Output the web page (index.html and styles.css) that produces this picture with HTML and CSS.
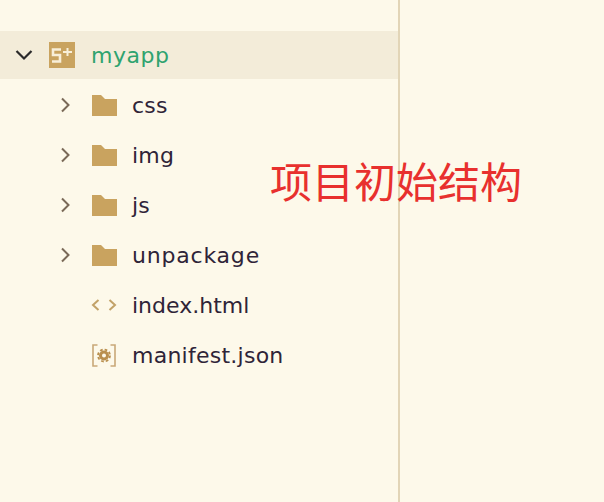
FILE: index.html
```html
<!DOCTYPE html>
<html lang="en">
<head>
    <meta charset="UTF-8">
    <meta name="viewport" content="width=device-width, initial-scale=1.0">
    <title>myapp</title>
    <link rel="stylesheet" href="styles.css">
</head>
<body>

    <!-- Project tree -->
    <div class="sidebar">
        <div class="row root">
            <svg class="arrow" viewBox="0 0 18 12" width="18" height="12"><path d="M1.5 2 L9 9.5 L16.5 2" fill="none" stroke="#2a2a2a" stroke-width="2.2"/></svg>
            <svg class="project-icon" viewBox="0 0 26 26" width="26" height="26">
                <rect width="26" height="26" fill="#c9a35f"/>
                <path d="M12 7.5 H4 V13 H11 V19.5 H3" fill="none" stroke="#f8efd9" stroke-width="2.6"/>
                <path d="M14 10 H23 M18.5 6 V14" fill="none" stroke="#f8efd9" stroke-width="2"/>
            </svg>
            <span class="name project-name">myapp</span>
        </div>

        <div class="row">
            <svg class="caret" viewBox="0 0 10 16" width="10" height="16"><path d="M2 1.5 L8.5 8 L2 14.5" fill="none" stroke="#7a6a58" stroke-width="2"/></svg>
            <svg class="folder" viewBox="0 0 26 21" width="26" height="21"><path d="M1 0 H10 L14 4 H26 V21 H1 Z" fill="#c9a35f"/></svg>
            <span class="name">css</span>
        </div>
        <div class="row">
            <svg class="caret" viewBox="0 0 10 16" width="10" height="16"><path d="M2 1.5 L8.5 8 L2 14.5" fill="none" stroke="#7a6a58" stroke-width="2"/></svg>
            <svg class="folder" viewBox="0 0 26 21" width="26" height="21"><path d="M1 0 H10 L14 4 H26 V21 H1 Z" fill="#c9a35f"/></svg>
            <span class="name">img</span>
        </div>
        <div class="row">
            <svg class="caret" viewBox="0 0 10 16" width="10" height="16"><path d="M2 1.5 L8.5 8 L2 14.5" fill="none" stroke="#7a6a58" stroke-width="2"/></svg>
            <svg class="folder" viewBox="0 0 26 21" width="26" height="21"><path d="M1 0 H10 L14 4 H26 V21 H1 Z" fill="#c9a35f"/></svg>
            <span class="name">js</span>
        </div>
        <div class="row">
            <svg class="caret" viewBox="0 0 10 16" width="10" height="16"><path d="M2 1.5 L8.5 8 L2 14.5" fill="none" stroke="#7a6a58" stroke-width="2"/></svg>
            <svg class="folder" viewBox="0 0 26 21" width="26" height="21"><path d="M1 0 H10 L14 4 H26 V21 H1 Z" fill="#c9a35f"/></svg>
            <span class="name wide">unpackage</span>
        </div>
        <div class="row file">
            <svg class="file-icon" viewBox="0 0 28 20" width="28" height="20"><path d="M8.5 5 L3 10 L8.5 15 M19.5 5 L25 10 L19.5 15" fill="none" stroke="#c2a268" stroke-width="2"/></svg>
            <span class="name tight">index.html</span>
        </div>
        <div class="row file">
            <svg class="file-icon" viewBox="0 0 28 24" width="28" height="24">
                <path d="M7.5 2 H3 V23 H7.5 M20.5 2 H25 V23 H20.5" fill="none" stroke="#c9a878" stroke-width="1.6"/>
                <circle cx="14" cy="12.5" r="3.5" fill="none" stroke="#b98f4e" stroke-width="3"/>
                <circle cx="14" cy="12.5" r="6" fill="none" stroke="#b98f4e" stroke-width="1.8" stroke-dasharray="2.7 2"/>
            </svg>
            <span class="name">manifest.json</span>
        </div>
    </div>

    <!-- Red note, sits across the divider -->
    <div class="note">项目初始结构</div>

</body>
</html>
```

FILE: styles.css
```css
/* Page */
body {
    margin: 0;
    height: 502px;
    overflow: hidden;
    background-color: #fdf9ea;
    font-family: "DejaVu Sans", "Noto Sans CJK SC", sans-serif;
}

/* Sidebar */
.sidebar {
    width: 400px;
    height: 502px;
    padding-top: 31px;
    border-right: 2px solid #e2d5b7;
    box-sizing: border-box;
}

.row {
    display: flex;
    align-items: center;
    height: 50px;
    padding-left: 60px;
}

.row.root {
    height: 48px;
    margin-bottom: 1px;
    padding-left: 15px;
    background-color: #f3ecd9;
}

.row.file {
    padding-left: 90px;
}

.arrow {
    margin-right: 16px;
}

.project-icon {
    margin-right: 16px;
}

.caret {
    margin-right: 21px;
}

.folder {
    margin-right: 15px;
}

.file-icon {
    margin-right: 14px;
}

.name {
    font-size: 22px;
    letter-spacing: 0.25px;
    color: #2f2438;
}

.name.wide {
    letter-spacing: 0.8px;
}

.name.tight {
    letter-spacing: 0;
}

.project-name {
    letter-spacing: 0.5px;
    color: #2fa36f;
}

/* Note */
.note {
    position: absolute;
    left: 270px;
    top: 154px;
    font-family: "Noto Sans CJK SC", sans-serif;
    font-size: 42px;
    line-height: 52px;
    color: #e8302e;
}
```
